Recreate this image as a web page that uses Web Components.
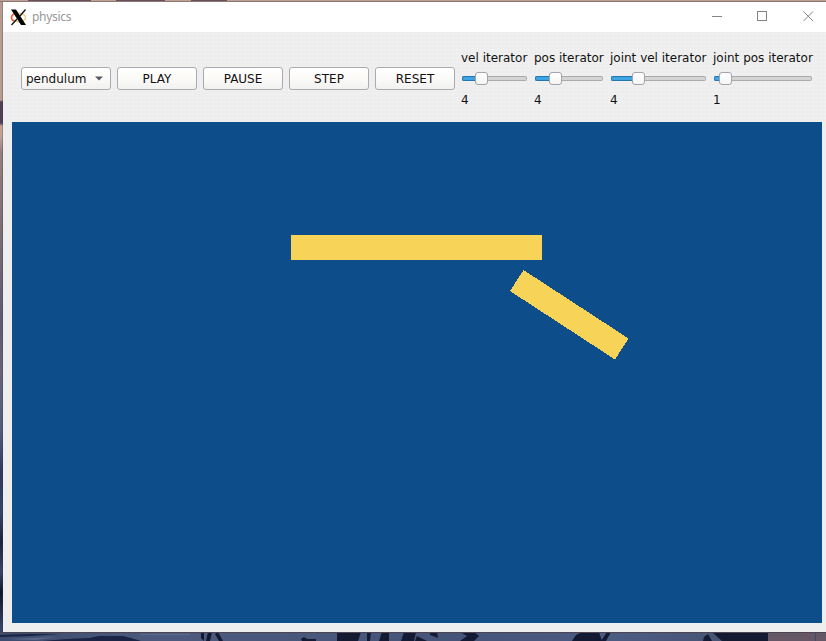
<!DOCTYPE html>
<html lang="en"><head><meta charset="utf-8"><title>physics</title>
<style>
html,body{margin:0;height:100%;overflow:hidden}
body{font:12px "DejaVu Sans",sans-serif;color:#111}
</style></head><body>
<physics-desktop>
<app-window caption="physics">
<tool-bar slot="tools">
<combo-box>pendulum</combo-box>
<push-button>PLAY</push-button><push-button>PAUSE</push-button><push-button>STEP</push-button><push-button>RESET</push-button>
<iter-slider style="width:67px;margin-right:6px;--fill:20px" label="vel iterator" value="4"></iter-slider>
<iter-slider style="width:70px;margin-right:6px;--fill:21px" label="pos iterator" value="4"></iter-slider>
<iter-slider style="width:97px;margin-right:6px;--fill:28px" label="joint vel iterator" value="4"></iter-slider>
<iter-slider style="width:100px;--fill:12px" label="joint pos iterator" value="1"></iter-slider>
</tool-bar>
<physics-scene></physics-scene>
</app-window>
</physics-desktop>
<script>
const define=(name,html,setup)=>customElements.define(name,class extends HTMLElement{
  connectedCallback(){
    if(this.shadowRoot)return;
    const t=document.createElement('template');t.innerHTML=html;
    this.attachShadow({mode:'open'}).append(t.content.cloneNode(true));
    if(setup)setup(this,this.shadowRoot);
  }
});
define('physics-desktop',`<style>
:host{display:grid;grid-template:2px 630px 9px / 3px 823px;width:826px;height:641px;overflow:hidden;background:#4b5674}
.top{grid-area:1/1/2/3;border-bottom:1px solid #8e7873;box-sizing:border-box;background:linear-gradient(90deg,#bda195 28px,#67505b 28px 91px,#bda195 91px 116px,#67505b 116px 165px,#bda195 165px 191px,#67505b 191px 227px,#b99f94 227px)}
.left{grid-area:2/1/3/2;background:linear-gradient(90deg,#0000 2px,#3334 2px),linear-gradient(#b89c91 0 98px,#514058 100px 121px,#c2a394 124px 134px,#94807f 150px,#7c6c77 230px,#5c5c75 320px,#68637a 370px,#4e5c7f 430px,#2d3a60 470px,#35456b 510px,#1b2342 540px,#38466a 570px,#10152c 590px,#354369 625px)}
slot{grid-area:2/2/3/3;display:block}
svg{grid-area:3/1/4/3;display:block}
</style><div class="top"></div><div class="left"></div><slot></slot>
<svg width="826" height="9" viewBox="0 0 826 9"><defs><linearGradient id="g"><stop stop-color="#3c4b6e"/><stop offset=".2" stop-color="#4d5a7d"/><stop offset=".55" stop-color="#46547a"/><stop offset=".75" stop-color="#4d5c82"/><stop offset="1" stop-color="#414b68"/></linearGradient></defs>
<path fill="url(#g)" d="M0 0h826v9H0z"/><path fill="#1b2444" d="M0 3l30-1 30 0-30 2-30 1zM42 9l25-2 22-1 10-2 24 0 8 2 10 3z"/><path fill="#5d698a" d="M6 7l50-2-20 3zM140 2h50v1h-50z"/>
<path fill="#141a32" d="M201 0l3 0 0 9-3-3zM208 0h4l-2 9h-4zM218 0l5 9h-4l-4-7zM301 7l3-2 3 2 9 0v2h-14zM337 0h24l-3 9h-21zM367 0h4l-1 9h-3zM382 0h7v9h-10zM404 0h12l-2 9h-13zM417 4l10 5h-12zM430 0h7l1 6-8-3zM460 0h14l5 4-5 5h-14l7-5zM576 3l6-3h17l3 9h-30zM607 0h4l-5 9h-5zM704 5l4-3 4 7h-9zM712 0h56v9h-46z"/>
<path fill="#665766" d="M768 1h47v8h-47zM816 1h10v8h-10z"/><path fill="#4e4553" d="M0 0h826v1H0z"/></svg>`);
define('app-window',`<style>
:host{display:flex;flex-direction:column;height:630px;background:#eee}
header{height:30px;background:#fff;display:flex;align-items:center;box-sizing:border-box;padding-left:7px;color:#999;font:12px "Noto Sans",sans-serif;letter-spacing:-.3px}
.title{margin-left:5px;flex:1;line-height:30px;height:30px}
.view{flex:1;padding:0 1px 9px 9px}
svg{display:block}
.controls{width:115px}
</style><header><svg width="17" height="18" viewBox="0 0 17 18"><ellipse cx="8.5" cy="9.5" rx="7" ry="4.3" fill="none" stroke="#f5c37c" stroke-width="1.3"/><path d="M7 5.3C0 6 0 12 5 13.2" fill="none" stroke="#ee5a31" stroke-width="1.5"/><path d="M1 1.5h5L16 17h-5z" fill="#000"/><path d="M15.5 1.5L10 8M7 11l-5.5 6" stroke="#111" stroke-width="1.3"/></svg><span class="title"></span>
<svg class="controls" width="115" height="30" viewBox="0 0 115 30" fill="none" stroke="#858585" shape-rendering="crispEdges"><path d="M1 14.5h10M46.500 9.500h9v9h-9z"/><path shape-rendering="auto" d="M92.500 9.500l9.500 9.500M102 9.500l-9.500 9.500"/></svg></header>
<slot name="tools"></slot><div class="view"><slot></slot></div>`,(h,r)=>r.querySelector('.title').textContent=h.getAttribute('caption'));
define('tool-bar',`<style>:host{display:flex;align-items:center;height:90px;box-sizing:border-box;padding:2px 0 0 18px;background:#eee radial-gradient(circle,#f2f2f2 .6px,#eee0 .9px) 0 0/4px 4px}
</style><slot></slot>`);
const face='box-sizing:border-box;height:23px;margin-right:6px;border:1px solid #aaaab0;border-radius:3px;background:linear-gradient(#fff,#fcfbf8 45%,#f1f1f1);line-height:23px;';
define('push-button',`<style>:host{${face}display:block;width:80px;text-align:center}</style><slot></slot>`);
define('combo-box',`<style>:host{${face}display:flex;justify-content:space-between;width:90px;padding:0 7px 0 4px}
svg{display:block;margin-top:8px}</style><span><slot></slot></span><svg width="8" height="5"><path d="M0 .5h8L4 4.500z" fill="#555762"/></svg>`);
define('iter-slider',`<style>:host{display:grid;grid-template-rows:15px 27px 15px;box-sizing:border-box;white-space:nowrap;line-height:17px}
.row{display:flex;align-items:center;margin:0 1px}
.fill,.rest{height:5px;box-sizing:border-box;border:1px solid #2277ad;background:#3fa4e3}
.fill{width:calc(var(--fill) - 7px);border-right:0;border-radius:2px 0 0 2px}
.rest{flex:1;border-color:#aaa;border-left:0;background:#d4d4d4;border-radius:0 2px 2px 0}
.thumb{width:13px;height:13px;box-sizing:border-box;border:1px solid #a3a2ad;border-radius:3px;background:linear-gradient(#fff,#f6f5f4)}
</style><span class="label"></span><div class="row"><div class="fill"></div><div class="thumb"></div><div class="rest"></div></div><span class="value"></span>`,(h,r)=>{for(const k of['label','value'])r.querySelector('.'+k).textContent=h.getAttribute(k)});
define('physics-scene',`<style>:host,svg{display:block}svg{background:#0c4d8a}</style><svg width="810" height="501" viewBox="0 0 810 501" fill="#f7d358" shape-rendering="crispEdges"><path d="M279 113h251v25H279z"/><path d="M511.500 148L616.500 216.500L603 237.500L498 169z"/></svg>`);
</script></body></html>
